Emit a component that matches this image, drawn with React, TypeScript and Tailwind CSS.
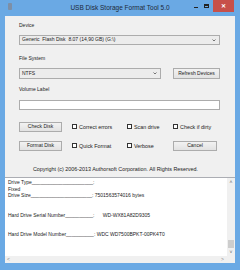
import React from "react";

const font = { fontFamily: '"Liberation Sans", Arial, sans-serif' };

function Btn({ label, w }: { label: string; w: string }) {
  return (
    <div
      className={`${w} border border-[#acacac] bg-gradient-to-b from-[#f2f2f2] to-[#e2e2e2] flex items-center justify-center text-[5px] text-[#222]`}
    >
      {label}
    </div>
  );
}

function Check({ label, w }: { label: string; w: string }) {
  return (
    <div className={`${w} flex items-center gap-[2px] text-[5.4px] text-[#222]`}>
      <div className="w-[5px] h-[5px] border border-[#333] bg-white" />
      {label}
    </div>
  );
}

function Caret() {
  return (
    <svg width="4" height="3" viewBox="0 0 4 3" className="mr-[3px]">
      <path d="M0.5 0.5 L2 2 L3.5 0.5" stroke="#555" strokeWidth="0.8" fill="none" />
    </svg>
  );
}

export default function App() {
  return (
    <div style={font} className="w-[240px] h-[270px] bg-[#6aa9e4] flex flex-col overflow-hidden">
      {/* title bar */}
      <div className="h-[16px] flex items-start relative">
        <div className="ml-[8px] mt-[3px] w-[4px] h-[7px] rounded-[1px] bg-[#7d8fa6]" />
        <div className="absolute left-0 right-0 top-[3px] text-center text-[6.5px] text-[#1e2a3a]">
          USB Disk Storage Format Tool 5.0
        </div>
        <div className="ml-auto flex items-start">
          <div className="w-[10px] h-[12px] flex items-center justify-center">
            <div className="w-[4px] h-[1px] bg-[#222] mt-[2px]" />
          </div>
          <div className="w-[10px] h-[12px] flex items-center justify-center">
            <div className="w-[5px] h-[4px] border border-[#222] border-t-2" />
          </div>
          <div className="ml-[2px] mr-[6px] w-[21px] h-[12px] bg-[#c7504a] flex items-center justify-center text-white text-[6px] font-bold">
            ✕
          </div>
        </div>
      </div>

      {/* client area */}
      <div className="mx-[5px] mb-[7px] flex-1 bg-[#f0f0f0] flex flex-col">
        <div className="pl-[14px] pr-[15px] pt-[6px] flex flex-col text-[5px] text-[#222]">
          <div className="h-[7px] leading-[7px]">Device</div>
          <div className="mt-[6px] h-[10px] border border-[#acacac] bg-[#ececec] flex items-center justify-between pl-[2px]">
            <span>Generic&nbsp; Flash Disk&nbsp; 8.07 (14,90 GB) (G:\)</span>
            <Caret />
          </div>
          <div className="mt-[10px] h-[7px] leading-[7px]">File System</div>
          <div className="mt-[6px] flex items-center justify-between">
            <div className="w-[142px] h-[11px] border border-[#acacac] bg-[#ececec] flex items-center justify-between pl-[2px]">
              <span>NTFS</span>
              <Caret />
            </div>
            <Btn label="Refresh Devices" w="w-[47px] h-[11px]" />
          </div>
          <div className="mt-[7px] h-[7px] leading-[7px]">Volume Label</div>
          <div className="mt-[7px] h-[10px] border border-[#acacac] bg-white" />

          <div className="mt-[12px] flex items-center">
            <Btn label="Check Disk" w="w-[43px] h-[10px] mr-[10px]" />
            <Check label="Correct errors" w="w-[55px]" />
            <Check label="Scan drive" w="w-[46px]" />
            <Check label="Check if dirty" w="w-[40px]" />
          </div>
          <div className="mt-[9px] flex items-center">
            <Btn label="Format Disk" w="w-[43px] h-[10px] mr-[10px]" />
            <Check label="Quick Format" w="w-[55px]" />
            <Check label="Verbose" w="w-[46px]" />
            <Btn label="Cancel" w="w-[44px] h-[10px]" />
          </div>
          <div className="mt-[15px] text-center h-[7px] leading-[7px] text-[5.4px] pr-[8px]">
            Copyright (c) 2006-2013 Authorsoft Corporation. All Rights Reserved.
          </div>
        </div>

        {/* output box */}
        <div className="mt-[4px] flex-1 border-t border-[#abadb3] bg-white flex flex-col">
          <div className="flex-1 flex">
            <div className="flex-1 pl-[3px] pt-[1px] text-[5px] leading-[6.5px] text-[#222] whitespace-pre">
              <div>Drive Type______________________:</div>
              <div>Fixed</div>
              <div>Drive Size______________________: 7501563574016 bytes</div>
              <div>&nbsp;</div>
              <div>&nbsp;</div>
              <div>Hard Drive Serial Number__________:{"      "}WD-WX81A82D9305</div>
              <div>&nbsp;</div>
              <div>&nbsp;</div>
              <div>Hard Drive Model Number__________: WDC WD7500BPKT-00PK4T0</div>
            </div>
            <div className="w-[8px] bg-[#f0f0f0] flex flex-col items-center text-[#606060] text-[5px]">
              <div className="h-[8px] leading-[8px]">˄</div>
              <div className="flex-1" />
              <div className="w-[6px] h-[8px] bg-[#cdcdcd]" />
              <div className="h-[8px] leading-[8px]">˅</div>
            </div>
          </div>
          <div className="h-[7px] bg-[#f0f0f0] flex items-center text-[#888] text-[5px]">
            <span className="ml-[2px]">&lt;</span>
            <span className="ml-auto mr-[11px]">&gt;</span>
          </div>
        </div>
      </div>
    </div>
  );
}
